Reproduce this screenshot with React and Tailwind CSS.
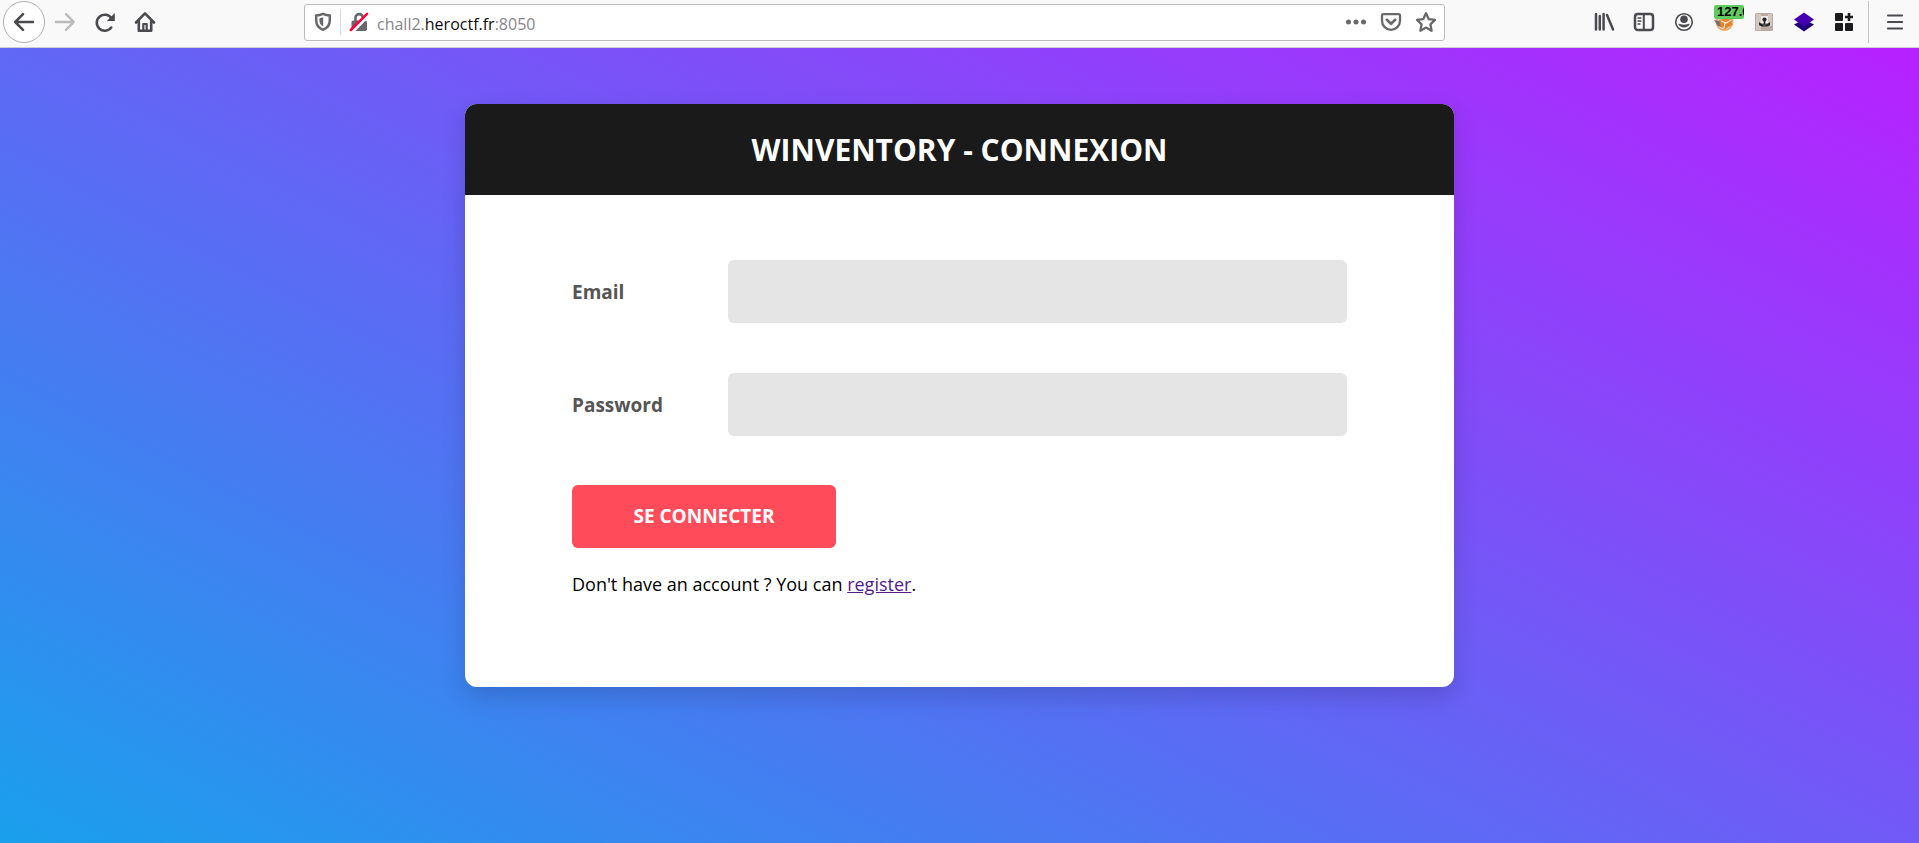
import React from "react";

const iconButton = "flex h-10 w-10 items-center justify-center";

function BrowserBar() {
  return (
    <header className="flex h-12 items-center border-b border-[#cfcfd2] bg-[#f9f9fa] pr-0.5 pl-[3px] text-[#4b4b4f]">
      <nav aria-label="Navigation" className="mb-1 flex shrink-0 items-center">
        <button aria-label="Back" className="flex h-[42px] w-[42px] items-center justify-center rounded-full border border-[#b0b0b2] bg-white">
          <svg width="22" height="22" viewBox="0 0 22 22" fill="none" stroke="currentColor" strokeWidth="2.6" strokeLinecap="round" strokeLinejoin="round">
            <path d="M20 11H2.500M10 3.200 2.200 11l7.800 7.800" />
          </svg>
        </button>
        <button aria-label="Forward" className={iconButton + " text-[#bababc]"}>
          <svg width="22" height="22" viewBox="0 0 22 22" fill="none" stroke="currentColor" strokeWidth="2.4" strokeLinecap="round" strokeLinejoin="round">
            <path d="M2 11h17.500M12 3.200l7.800 7.800-7.800 7.800" />
          </svg>
        </button>
        <button aria-label="Reload" className={iconButton}>
          <svg width="22" height="22" viewBox="0 0 22 22" fill="none" stroke="currentColor" strokeWidth="2.6" strokeLinecap="round">
            <path d="M17.200 16.500A8 8 0 1 1 17.600 7.500" />
            <path d="M20.800 2v8h-8z" fill="currentColor" stroke="none" />
          </svg>
        </button>
        <button aria-label="Home" className={iconButton}>
          <svg width="22" height="22" viewBox="0 0 22 22" fill="none" stroke="currentColor" strokeWidth="2.600" strokeLinecap="round" strokeLinejoin="round">
            <path d="M2 11.500 11 2.400l9 9.100M4.800 10v9.700h12.400V10" />
            <path d="M9.300 19v-6h3.400v6" strokeWidth="2.200" />
          </svg>
        </button>
      </nav>

      <div className="mx-auto mb-[3px] flex h-[37px] w-[60%] max-w-[1141px] items-center rounded-[3px] border border-[#bdbdbf] bg-white pr-[7px] pl-[9px] text-[#68686b]">
        <svg className="shrink-0" width="18" height="20" viewBox="0 0 18 20" fill="none" stroke="currentColor" strokeWidth="2.500" strokeLinejoin="round">
          <path d="M9 1.800c2.300 1 4.300 1.500 6.800 1.700v5c0 4.500-2.500 7.600-6.800 9.300C4.700 16.100 2.200 13 2.200 8.500v-5C4.700 3.300 6.700 2.800 9 1.800z" />
          <path d="M9.200 5.200v9.300c-2.600-1.400-3.800-3.200-3.800-6V6.200z" fill="currentColor" stroke="none" />
        </svg>
        <span className="mx-2 h-[26px] w-px shrink-0 bg-[#d7d7db]" />
        <svg className="shrink-0" width="20" height="20" viewBox="0 0 20 20" fill="none">
          <path d="M6.500 9V5.800a3.700 3.700 0 0 1 7.400 0V9" stroke="currentColor" strokeWidth="2.600" />
          <rect x="2.500" y="8.600" width="15.500" height="10.400" rx="1.800" fill="currentColor" />
          <path d="M3.500 19 19.500 3" stroke="#fff" strokeWidth="4" />
          <path d="M1.800 18 18 1.800" stroke="#ff0039" strokeWidth="2.500" strokeLinecap="round" />
        </svg>
        <p className="ml-2 flex-1 pt-[3px] text-[16px] leading-6 text-[#86868a]">
          chall2.<span className="text-[#0c0c0d]">heroctf.fr</span>:8050
        </p>
        <button aria-label="Page actions" className="flex h-9 items-center">
          <svg width="22" height="22" viewBox="0 0 22 22" fill="currentColor">
            <circle cx="3.500" cy="11" r="2.500" /><circle cx="11" cy="11" r="2.500" /><circle cx="18.500" cy="11" r="2.500" />
          </svg>
        </button>
        <button aria-label="Save to Pocket" className="ml-[13px] flex h-9 items-center">
          <svg width="22" height="22" viewBox="0 0 22 22" fill="none" stroke="currentColor" strokeWidth="2.300" strokeLinecap="round" strokeLinejoin="round">
            <path d="M3.200 3.200h15.600a1.200 1.200 0 0 1 1.200 1.200v5.400a9 9 0 0 1-18 0V4.400a1.200 1.200 0 0 1 1.200-1.200z" />
            <path d="m6.800 8.800 4.200 4 4.200-4" strokeWidth="2.600" />
          </svg>
        </button>
        <button aria-label="Bookmark" className="ml-[13px] flex h-9 items-center">
          <svg width="22" height="22" viewBox="0 0 22 22" fill="none" stroke="currentColor" strokeWidth="2.300" strokeLinejoin="round">
            <path d="m11 2.200 2.700 5.900 6.300.8-4.600 4.400 1.200 6.500-5.600-3.200-5.600 3.200 1.200-6.500L2 8.900l6.300-.8z" />
          </svg>
        </button>
      </div>

      <div className="mb-1 flex shrink-0 items-center">
        <button aria-label="Library" className={iconButton}>
          <svg width="22" height="22" viewBox="0 0 22 22" fill="none" stroke="currentColor" strokeWidth="2.500" strokeLinecap="round">
            <path d="M3 3v15.500M6.800 5v13.500M10.600 3v15.500M14 4l6 14.500" />
          </svg>
        </button>
        <button aria-label="Sidebars" className={iconButton}>
          <svg width="22" height="22" viewBox="0 0 22 22" fill="none" stroke="currentColor" strokeWidth="2.500" strokeLinecap="round">
            <rect x="2" y="3" width="18" height="16" rx="2.800" />
            <path d="M10.800 3v16" strokeWidth="2" />
            <path d="M5 7h3M5 10h3M5 13h2" strokeWidth="1.300" />
          </svg>
        </button>
        <button aria-label="Account" className={iconButton}>
          <svg width="20" height="20" viewBox="0 0 20 20" fill="none">
            <circle cx="10" cy="10" r="8.300" stroke="currentColor" strokeWidth="1.600" />
            <circle cx="10" cy="7.200" r="3.800" fill="currentColor" />
            <path d="M4.200 12c1.700-.6 2.300.8 5.800.8s4.100-1.400 5.800-.8a6.600 6.600 0 0 1-11.600 0z" fill="currentColor" />
          </svg>
        </button>
        <button aria-label="Proxy" className={iconButton + " relative"}>
          <svg width="22" height="22" viewBox="0 0 22 22">
            <circle cx="11.500" cy="11" r="9" fill="#f2a45c" />
            <circle cx="11.500" cy="11" r="7.300" fill="#d9d3cd" />
            <path d="M1 9l6 1 2 6-4-1z" fill="#77716c" />
            <path d="m6 9 12-3 1 8-7 4-4-2z" fill="#e5832b" />
            <path d="m8 10 5 2 5-3M12 12l-1 5" stroke="#fff0df" strokeWidth="1.200" fill="none" />
          </svg>
          <span className="absolute top-[3px] left-[10px] h-[14px] w-[30px] overflow-hidden rounded-[2px] bg-[#5fcb5f] pl-[3px] text-left font-['Liberation_Sans',sans-serif] text-[13px] leading-[14px] font-bold text-black">127.0</span>
        </button>
        <button aria-label="Extension" className={iconButton}>
          <svg width="18" height="18" viewBox="0 0 18 18">
            <rect width="18" height="18" rx="1.500" fill="#b9aaa2" />
            <path d="M1 1h5v16H1zM13 1h4v12h-4z" fill="#d3c8c1" />
            <path d="M6 3h7v7H6z" fill="#efeae6" />
            <circle cx="9.500" cy="6.500" r="2.100" fill="#242426" />
            <path d="M8.700 8h1.600v4.500H8.700zM4 9v3c2 2 9 2 11 0V9l-2 1.500c-1 1.500-6 1.500-7 0z" fill="#242426" />
          </svg>
        </button>
        <button aria-label="Layers" className={iconButton}>
          <svg width="22" height="22" viewBox="0 0 22 22">
            <path d="m1 13.500 10-5 10 5-10 7z" fill="#1e0078" />
            <path d="M11 1.500 21 8.500l-10 7-10-7z" fill="#4400b0" />
          </svg>
        </button>
        <button aria-label="Add-ons" className={iconButton + " text-[#1c1c1e]"}>
          <svg width="20" height="20" viewBox="0 0 20 20" fill="currentColor">
            <rect x="1" y="1" width="8" height="8" rx="1" /><rect x="1" y="11" width="8" height="8" rx="1" /><rect x="11" y="11" width="8" height="8" rx="1" />
            <path d="M13.700 1h2.600v2.700H19v2.600h-2.700V9h-2.600V6.300H11V3.700h2.700z" />
          </svg>
        </button>
        <span className="mx-1 h-[42px] w-px bg-[#c4c4c6]" />
        <button aria-label="Menu" className="flex h-10 w-[44px] items-center justify-center">
          <svg width="18" height="18" viewBox="0 0 18 18" stroke="currentColor" strokeWidth="2.200" strokeLinecap="round">
            <path d="M2 2.500h14M2 9h14M2 15.500h14" />
          </svg>
        </button>
      </div>
    </header>
  );
}

function Field({ id, type, label }) {
  return (
    <div className="flex items-center">
      <label htmlFor={id} className="w-[156px] shrink-0 text-[19px] leading-7 font-bold text-[#555]">{label}</label>
      <input id={id} name={id} type={type} className="h-[63px] min-w-0 flex-1 rounded-[6px] bg-[#e5e5e5] px-6 text-[19px] outline-none" />
    </div>
  );
}

export default function App() {
  return (
    <div className="flex min-h-screen flex-col font-['Open_Sans',sans-serif]">
      <BrowserBar />
      <main className="flex-1 bg-[linear-gradient(to_top_right,#08aeea_0%,#b721ff_100%)] bg-[length:100%_125%] bg-top bg-no-repeat px-4 pt-14 pb-16">
        <div className="mx-auto max-w-[989px] rounded-[12px] bg-white shadow-[0_10px_25px_rgba(0,0,0,0.15)]">
          <div className="rounded-t-[12px] bg-[#1a1a1a] py-6">
            <h1 className="text-center text-[30px] leading-[43px] font-bold text-white uppercase">Winventory - Connexion</h1>
          </div>
          <form className="px-[107px] pt-[65px] pb-[84px]" onSubmit={(e) => e.preventDefault()}>
            <div className="flex flex-col gap-[50px]">
              <Field id="email" type="email" label="Email" />
              <Field id="password" type="password" label="Password" />
            </div>
            <button type="submit" className="mt-[49px] block h-[63px] w-[264px] rounded-[6px] bg-[#ff4b5a] text-[19px] font-bold text-white uppercase">Se connecter</button>
            <p className="mt-[18px] text-[18px] leading-[37px] text-black">
              Don't have an account ? You can <a href="#register" className="text-[#551a8b] underline">register</a>.
            </p>
          </form>
        </div>
      </main>
    </div>
  );
}
